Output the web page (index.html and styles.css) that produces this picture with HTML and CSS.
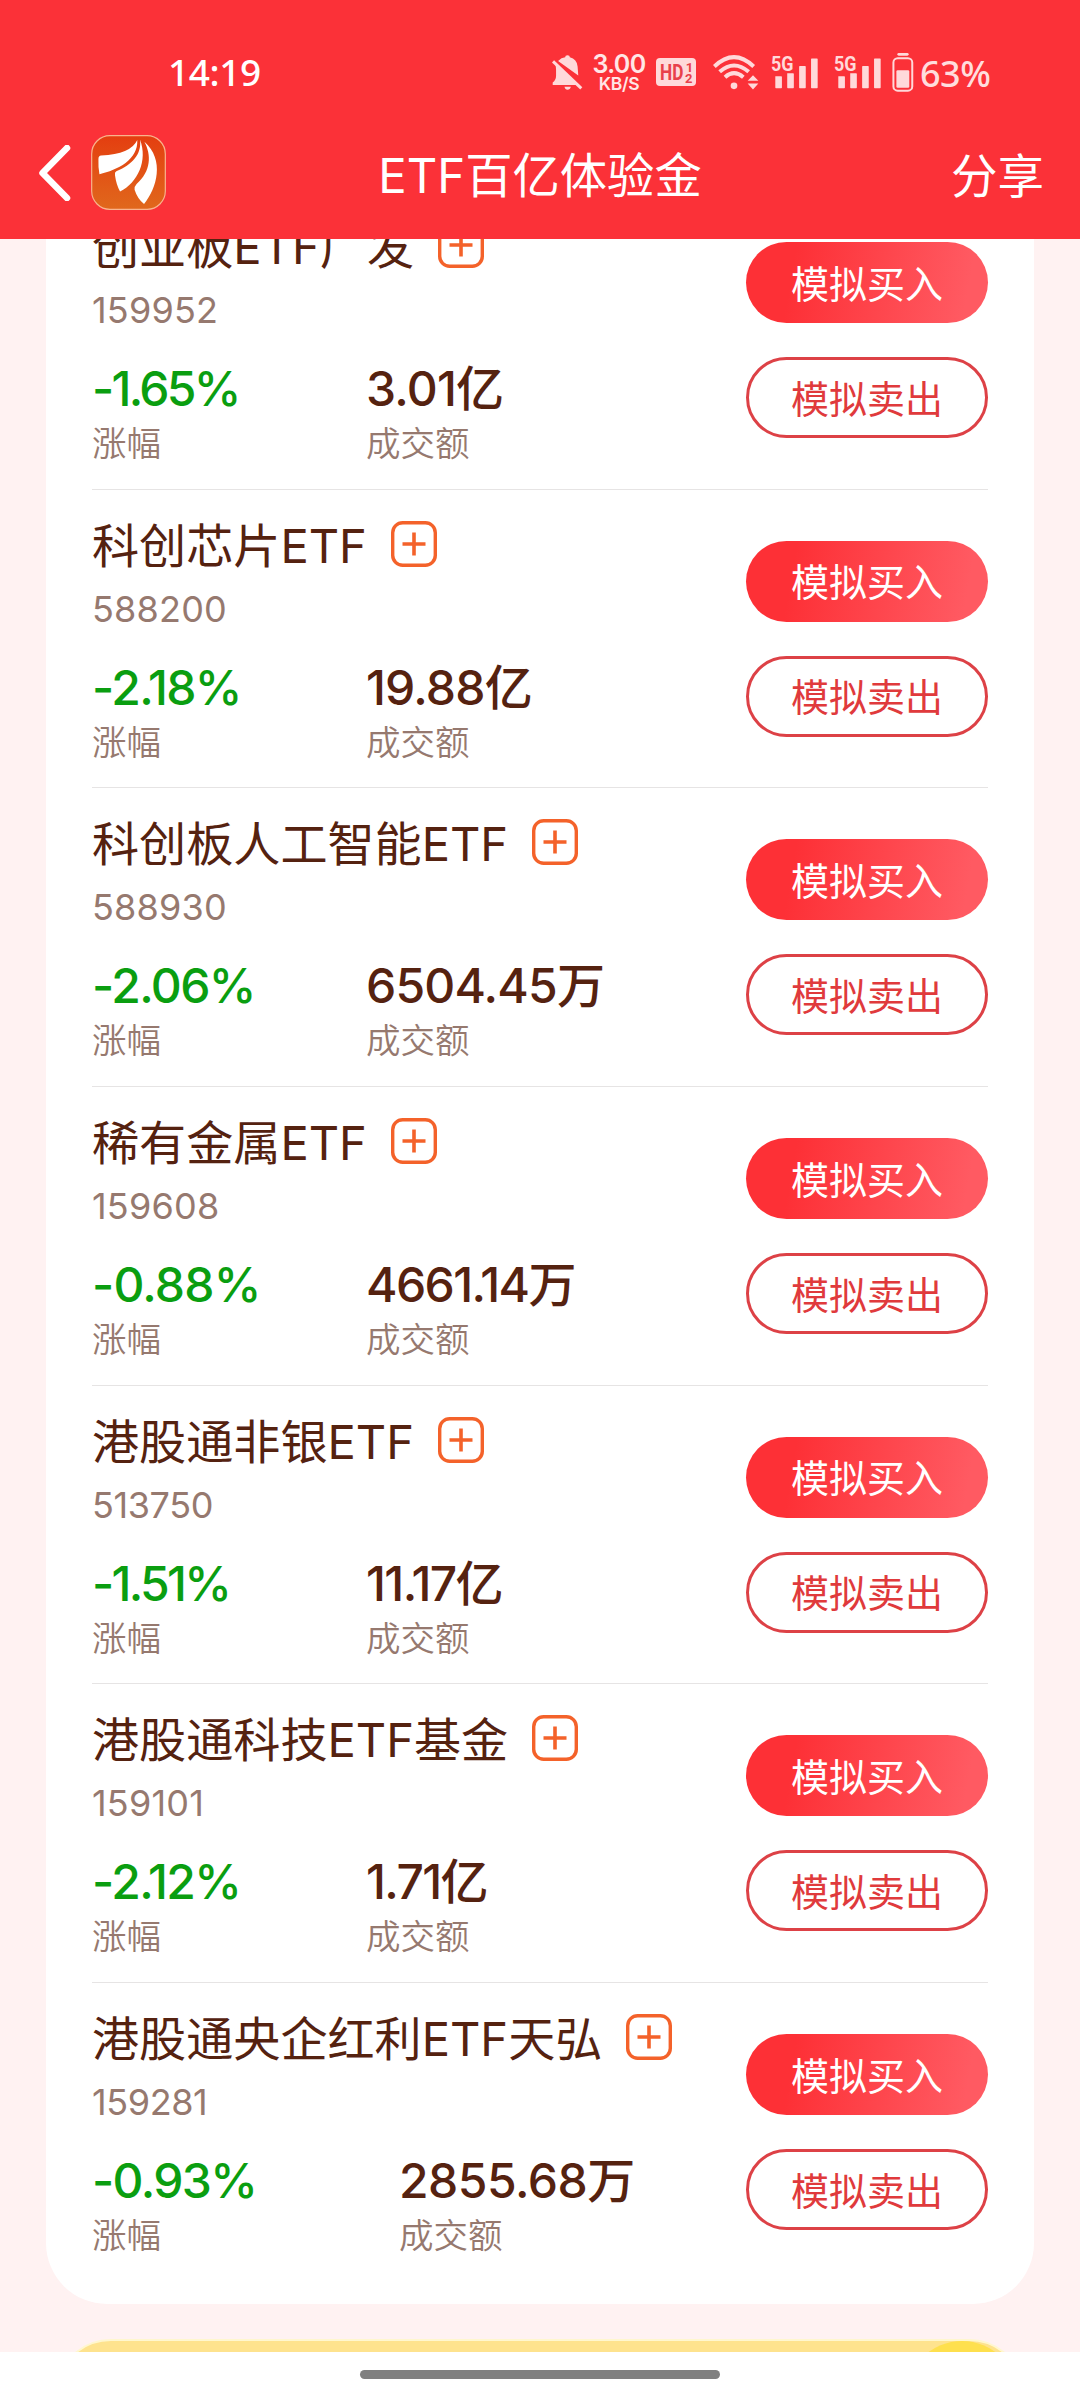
FILE: index.html
```html
<!DOCTYPE html>
<html lang="zh-CN">
<head>
<meta charset="utf-8">
<title>ETF百亿体验金</title>
<link rel="stylesheet" href="styles.css">
</head>
<body>
<svg class="defs" width="0" height="0" aria-hidden="true">
  <symbol id="add" viewBox="0 0 46 46">
    <rect x="1.7" y="1.7" width="42.6" height="42.6" rx="10" fill="none" stroke="#f4622a" stroke-width="3.400"/>
    <path d="M11.5 23h23M23 11.500v23" stroke="#f4622a" stroke-width="3.600" fill="none"/>
  </symbol>
  <symbol id="signal" viewBox="0 0 142 102">
    <text class="net" x="0" y="47" textLength="68" lengthAdjust="spacingAndGlyphs">5G</text>
    <path d="M13 64h18q2 0 2 2v32q0 2-2 2H15q-2 0-2-2V66zM49 55h18q2 0 2 2v41q0 2-2 2H51q-2 0-2-2V57zM87 33h16q2 0 2 2v63q0 2-2 2H87q-2 0-2-2V35q0-2 2-2zM123 10h16q2 0 2 2v86q0 2-2 2h-16q-2 0-2-2V12q0-2 2-2z"/>
  </symbol>
</svg>
<div class="screen">
  <header class="header">
    <div class="status">
      <span class="clock">14:19</span>
      <svg class="bell" viewBox="38 42 92 104">
        <path d="M56 60Q66 50 77 49Q77 43 84 43Q91 43 91 49Q112 55 114 76L116 103zM48 70L113 131H40V124Q50 117 50 104V86Q50 78 48 70zM75 136H94Q92 145 84 145Q77 145 75 136z"/>
        <path d="M41 61L125 141" class="slash"/>
      </svg>
      <div class="speed"><span class="rate">3.00</span><span class="unit">KB/S</span></div>
      <svg class="hd" viewBox="0 0 120 84">
        <rect width="120" height="84" rx="12"/>
        <text class="hd-main" x="12" y="67" textLength="70" lengthAdjust="spacingAndGlyphs">HD</text>
        <text class="hd-sub" x="89" y="41">1</text>
        <text class="hd-sub" x="87" y="74">2</text>
      </svg>
      <svg class="wifi" viewBox="520 42 138 104">
        <path class="arc" d="M524 76Q583 20 642 76M540 92Q583 54 627 92M556 108Q583 84 611 108"/>
        <circle cx="583" cy="134" r="10"/>
        <path d="M640 102L656 119H624zM640 145L656 127H624z"/>
      </svg>
      <svg class="signal"><use href="#signal"/></svg>
      <svg class="signal signal-second"><use href="#signal"/></svg>
      <svg class="battery" viewBox="395 38 66 118">
        <rect x="411" y="38" width="34" height="8" rx="4"/>
        <rect class="shell" x="399" y="54" width="57" height="98" rx="13"/>
        <rect x="408" y="90" width="39" height="53" rx="4"/>
      </svg>
      <span class="percent">63%</span>
    </div>
    <nav class="nav">
      <svg class="back" viewBox="0 0 32 56"><path d="M28 3L3.500 28L28 53"/></svg>
      <svg class="logo" viewBox="183 17 222 222">
        <defs><linearGradient id="logo-bg" x1="0" y1="0" x2="0" y2="1"><stop offset="0" stop-color="#e43e10"/><stop offset="1" stop-color="#e0681c"/></linearGradient></defs>
        <rect x="185" y="19" width="218" height="218" rx="54" fill="url(#logo-bg)" stroke="#f9b48d" stroke-width="3.500"/>
        <path class="petal" d="M320 32Q301 74 213 78Q205 79 205 88Q204 112 208 133C262 121 323 90 320 32zM328 30C334 74 304 105 258 124Q252 127 254 136Q258 165 269 184C321 158 352 93 328 30zM341 37C362 76 361 124 318 162Q311 169 312 179Q321 207 340 221C378 176 402 90 341 37z"/>
      </svg>
      <h1 class="title">ETF百亿体验金</h1>
      <span class="share">分享</span>
    </nav>
  </header>
  <main class="page">
    <section class="card">
      <article class="fund">
        <div class="info">
          <div class="name"><span>创业板ETF广发</span><svg class="add"><use href="#add"/></svg></div>
          <div class="code">159952</div>
          <div class="stats">
            <div class="stat"><b class="value down tight">-1.65%</b><span class="label">涨幅</span></div>
            <div class="stat"><b class="value">3.01亿</b><span class="label">成交额</span></div>
          </div>
        </div>
        <div class="actions"><button class="buy">模拟买入</button><button class="sell">模拟卖出</button></div>
      </article>
      <article class="fund">
        <div class="info">
          <div class="name"><span>科创芯片ETF</span><svg class="add"><use href="#add"/></svg></div>
          <div class="code">588200</div>
          <div class="stats">
            <div class="stat"><b class="value down snug">-2.18%</b><span class="label">涨幅</span></div>
            <div class="stat"><b class="value">19.88亿</b><span class="label">成交额</span></div>
          </div>
        </div>
        <div class="actions"><button class="buy">模拟买入</button><button class="sell">模拟卖出</button></div>
      </article>
      <article class="fund">
        <div class="info">
          <div class="name"><span>科创板人工智能ETF</span><svg class="add"><use href="#add"/></svg></div>
          <div class="code">588930</div>
          <div class="stats">
            <div class="stat"><b class="value down snug">-2.06%</b><span class="label">涨幅</span></div>
            <div class="stat"><b class="value">6504.45万</b><span class="label">成交额</span></div>
          </div>
        </div>
        <div class="actions"><button class="buy">模拟买入</button><button class="sell">模拟卖出</button></div>
      </article>
      <article class="fund">
        <div class="info">
          <div class="name"><span>稀有金属ETF</span><svg class="add"><use href="#add"/></svg></div>
          <div class="code">159608</div>
          <div class="stats">
            <div class="stat"><b class="value down">-0.88%</b><span class="label">涨幅</span></div>
            <div class="stat"><b class="value snug">4661.14万</b><span class="label">成交额</span></div>
          </div>
        </div>
        <div class="actions"><button class="buy">模拟买入</button><button class="sell">模拟卖出</button></div>
      </article>
      <article class="fund">
        <div class="info">
          <div class="name"><span>港股通非银ETF</span><svg class="add"><use href="#add"/></svg></div>
          <div class="code code-snug">513750</div>
          <div class="stats">
            <div class="stat"><b class="value down tight">-1.51%</b><span class="label">涨幅</span></div>
            <div class="stat"><b class="value snug">11.17亿</b><span class="label">成交额</span></div>
          </div>
        </div>
        <div class="actions"><button class="buy">模拟买入</button><button class="sell">模拟卖出</button></div>
      </article>
      <article class="fund">
        <div class="info">
          <div class="name"><span>港股通科技ETF基金</span><svg class="add"><use href="#add"/></svg></div>
          <div class="code">159101</div>
          <div class="stats">
            <div class="stat"><b class="value down snug">-2.12%</b><span class="label">涨幅</span></div>
            <div class="stat"><b class="value snug">1.71亿</b><span class="label">成交额</span></div>
          </div>
        </div>
        <div class="actions"><button class="buy">模拟买入</button><button class="sell">模拟卖出</button></div>
      </article>
      <article class="fund">
        <div class="info">
          <div class="name"><span>港股通央企红利ETF天弘</span><svg class="add"><use href="#add"/></svg></div>
          <div class="code code-snug">159281</div>
          <div class="stats stats-wide">
            <div class="stat"><b class="value down snug">-0.93%</b><span class="label">涨幅</span></div>
            <div class="stat"><b class="value loose">2855.68万</b><span class="label">成交额</span></div>
          </div>
        </div>
        <div class="actions"><button class="buy">模拟买入</button><button class="sell">模拟卖出</button></div>
      </article>
    </section>
    <section class="banner"><i class="coin"></i></section>
  </main>
  <footer class="gesture"><i class="handle"></i></footer>
</div>
</body>
</html>
```
FILE: styles.css
```css
* { box-sizing: border-box; }
body {
  margin: 0;
  font-family: Inter, "Noto Sans CJK SC", sans-serif;
  color: #552210;
}
.defs { position: absolute; }
.screen {
  width: 1080px;
  height: 2400px;
  display: flex;
  flex-direction: column;
  overflow: hidden;
  background: #fff;
}

/* header */
.header {
  flex: none;
  height: 239px;
  padding-top: 48px;
  background: #fb3138;
  color: #fff;
}
.status {
  height: 48px;
  display: flex;
  align-items: center;
  padding-left: 168px;
  fill: #ffd9da;
}
.status svg { flex: none; }
.clock {
  width: 384px;
  font: 500 37px/48px "Noto Sans", sans-serif;
  letter-spacing: -0.400px;
}
.bell { width: 31px; height: 35px; margin-right: 10px; }
.slash { fill: none; stroke: #ffd9da; stroke-width: 9; }
.speed {
  width: 52px;
  margin-right: 11px;
  display: flex;
  flex-direction: column;
  align-items: center;
  color: #ffe6e6;
  font-weight: 600;
}
.rate { margin-top: 3px; font-size: 25px; line-height: 19px; letter-spacing: -0.7px; }
.unit { margin-top: 1px; font-size: 17.500px; line-height: 18px; letter-spacing: -0.4px; }
.hd { width: 40px; height: 28px; margin-right: 17px; }
.hd text { fill: #e8404a; font-family: Roboto, sans-serif; font-weight: 700; }
.hd .hd-main { font-size: 68px; }
.hd .hd-sub { font-size: 39px; }
.wifi { width: 46px; height: 35px; margin-right: 12px; }
.arc { fill: none; stroke: #ffd9da; stroke-width: 12; }
.signal { width: 47px; height: 34px; margin-right: 16px; }
.signal-second { margin-right: 11px; }
.net { font: 700 62px Roboto, sans-serif; }
.battery { width: 22px; height: 39px; margin-right: 6px; }
.shell { fill: none; stroke: #ffd9da; stroke-width: 6; }
.percent { padding-top: 3px; font: 500 36px/48px "Noto Sans", sans-serif; letter-spacing: -0.500px; color: #ffdddd; }
.nav {
  height: 143px;
  display: grid;
  grid-template-columns: 31px 75px 1fr 94px;
  align-items: center;
  padding: 14px 35px 0 39px;
}
.back { width: 32px; height: 56px; fill: none; stroke: #fff; stroke-width: 6.500; stroke-linecap: round; stroke-linejoin: round; margin-top: -3px; }
.logo { width: 75px; height: 75px; margin: -4px 0 0 21px; }
.petal { fill: #fff; }
.title, .share { margin: 0; font-size: 47.300px; line-height: 60px; font-weight: 400; }
.title { padding: 2px 16px 0 0; text-align: center; }
.share { padding-top: 2px; font-size: 46.500px; }

/* fund list */
.page {
  flex: none;
  height: 2112.500px;
  overflow: hidden;
  background: #fff2f2;
  display: flex;
  flex-direction: column;
  align-items: center;
}
.card {
  flex: none;
  width: 988px;
  height: 2113px;
  margin-top: -48px;
  padding: 0 46px;
  background: #fff;
  border-radius: 0 0 61px 61px;
}
.fund {
  height: 298.680px;
  display: flex;
  justify-content: space-between;
  border-bottom: 1px solid #e6e4e4;
}
.fund:last-child { border-bottom: 0; }
.info { padding-top: 31px; }
.name {
  height: 46px;
  display: flex;
  align-items: center;
  gap: 24px;
  font-size: 47.100px;
  line-height: 46px;
  white-space: nowrap;
}
.name span { padding-top: 4px; }
.add { width: 46px; height: 46px; flex: none; }
.code { margin-top: 20px; font-size: 36px; line-height: 44px; color: #96796f; font-weight: 400; letter-spacing: 0.200px; }
.code-snug { letter-spacing: -0.400px; }
.stats { margin-top: 29px; display: grid; grid-template-columns: 274px auto; }
.stats-wide { grid-template-columns: 307px auto; }
.stat { display: flex; flex-direction: column; }
.value { font-size: 48px; line-height: 56px; font-weight: 500; letter-spacing: -0.8px; white-space: nowrap; }
.snug { letter-spacing: -1.600px; }
.tight { letter-spacing: -2.700px; }
.loose { letter-spacing: -0.500px; }
.down { color: #0a9e10; }
.label { margin-top: 4px; font-size: 34.500px; line-height: 46px; font-weight: 350; color: #96796f; }
.actions { padding-top: 51px; display: flex; flex-direction: column; gap: 34px; }
.buy, .sell {
  width: 242px;
  height: 81px;
  padding: 0;
  border: 0;
  border-radius: 41px;
  font: 400 38px/76px "Noto Sans CJK SC", sans-serif;
}
.buy { padding-bottom: 2px; color: #fff; background: linear-gradient(100deg, #fd3036 20%, #ff5a62 90%); }
.sell { padding-bottom: 2px; color: #e03a3c; background: #fff; border: 3px solid #dd4146; line-height: 70px; }

/* banner clipped by the bottom of the viewport */
.banner {
  flex: none;
  width: 970px;
  height: 120px;
  margin-top: 35px;
  border: 2px solid #fff7cf;
  border-radius: 56px;
  background: #fee38e;
  overflow: hidden;
  display: flex;
  justify-content: flex-end;
}
.coin { width: 112px; height: 112px; margin-right: 5px; border-radius: 50%; background: #fee04e; }

.gesture { flex: 1; display: flex; justify-content: center; padding-top: 18.500px; }
.handle { width: 360px; height: 9px; border-radius: 5px; background: #808080; }
```
